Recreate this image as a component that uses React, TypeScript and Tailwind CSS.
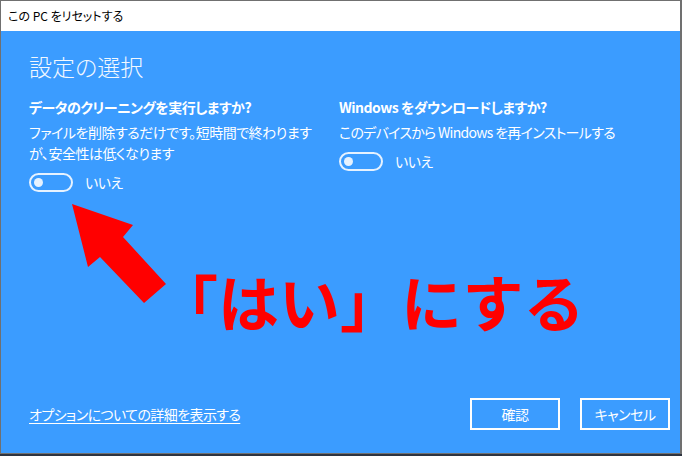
import React from "react";

function Toggle() {
  return (
    <div className="flex items-center gap-[12px]">
      <div className="w-[44px] h-[19px] rounded-full border-2 border-[#e6f2ff] flex items-center pl-[3px]">
        <div className="w-[9px] h-[9px] rounded-full bg-[#e6f2ff]" />
      </div>
      <span className="text-[14px] leading-[19px] text-white">いいえ</span>
    </div>
  );
}

export default function App() {
  return (
    <div className="relative w-[682px] h-[456px] overflow-hidden bg-[#2e3440] font-['Noto_Sans_CJK_JP',sans-serif] [font-feature-settings:'palt']">
      <div className="h-[454px] flex flex-col border-t border-l border-r-2 border-b border-[#707070]">
        <div className="h-[30px] bg-white flex items-center pl-[7px]">
          <span className="text-[12px] text-black leading-[16px]">この PC をリセットする</span>
        </div>
        <div className="flex-1 bg-[#3b9cff] flex flex-col pl-[28px] pr-[10px] pt-[24px] pb-[23px] text-white tracking-[-0.5px]">
          <h1 className="text-[23px] leading-[23px] font-light text-[#f2f8ff] tracking-normal">設定の選択</h1>
          <div className="flex mt-[19px]">
            <div className="w-[310px] flex flex-col">
              <div className="text-[14px] leading-[21px] font-bold">データのクリーニングを実行しますか?</div>
              <div className="text-[14px] leading-[21px] mt-[4px]">
                ファイルを削除するだけです。短時間で終わります
                <br />
                が、安全性は低くなります
              </div>
              <div className="mt-[9px]">
                <Toggle />
              </div>
            </div>
            <div className="flex flex-col">
              <div className="text-[14px] leading-[21px] font-bold">Windows をダウンロードしますか?</div>
              <div className="text-[14px] leading-[21px] mt-[4px] tracking-[-0.7px]">このデバイスから Windows を再インストールする</div>
              <div className="mt-[9px]">
                <Toggle />
              </div>
            </div>
          </div>
          <div className="mt-auto flex items-center justify-between">
            <a className="text-[14px] leading-[20px] underline underline-offset-[3px] decoration-1 text-white tracking-[-0.6px]">
              オプションについての詳細を表示する
            </a>
            <div className="flex gap-[20px]">
              <button className="w-[90px] h-[32px] border-2 border-white text-[14px] text-white flex items-center justify-center">
                確認
              </button>
              <button className="w-[90px] h-[32px] border-2 border-white text-[14px] text-white flex items-center justify-center">
                キャンセル
              </button>
            </div>
          </div>
        </div>
      </div>

      <svg className="absolute left-0 top-0" width="682" height="456" viewBox="0 0 682 456">
        <polygon
          points="72,204 133,225 123,237 166,284 144,303 100,257 88,267"
          fill="#ff0000"
        />
      </svg>
      <div className="absolute left-[157px] top-[270px] text-[61px] leading-[61px] font-bold text-[#ff0000] [font-feature-settings:normal] whitespace-nowrap">
        「はい」にする
      </div>
    </div>
  );
}
